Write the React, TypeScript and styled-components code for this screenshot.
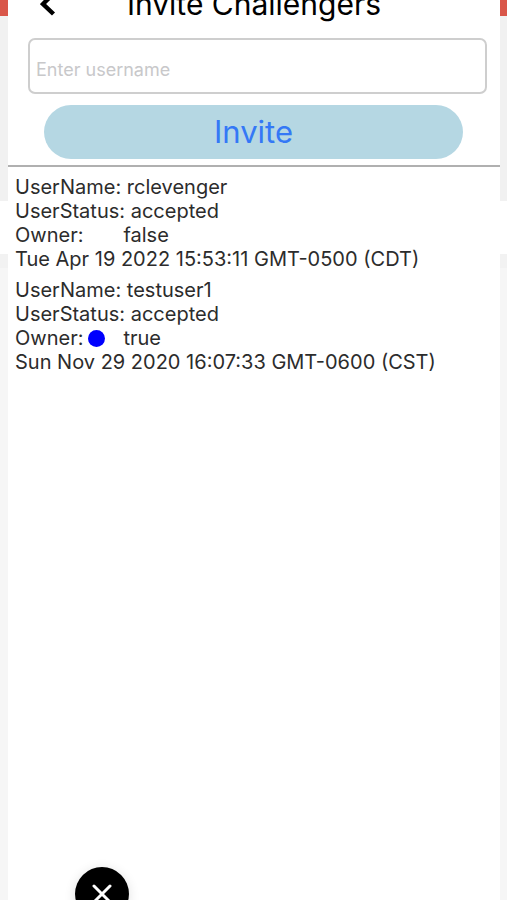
import React, { useState } from "react";
import styled, { createGlobalStyle } from "styled-components";

const GlobalStyle = createGlobalStyle`
  *, *::before, *::after { box-sizing: border-box; }
  body {
    margin: 0;
    background: #f6f6f6;
    font-family: Inter, "Liberation Sans", sans-serif;
  }
`;

const Screen = styled.div`
  display: grid;
  min-height: 100vh;
  overflow: hidden;
`;

const Backdrop = styled.div`
  grid-area: 1 / 1;
  display: flex;
  flex-direction: column;
`;

const Band = styled.div<{ $color: string; $height: number }>`
  height: ${(p) => p.$height}px;
  background: ${(p) => p.$color};
`;

const Sheet = styled.main`
  grid-area: 1 / 1;
  z-index: 1;
  display: flex;
  flex-direction: column;
  margin: 0 7px 0 8px;
  background: #fff;
`;

const Header = styled.header`
  display: grid;
  grid-template-columns: 56px 1fr 56px;
  align-content: end;
  align-items: end;
  height: 21px;
  padding: 0 12px;
`;

const BackButton = styled.button`
  display: flex;
  justify-content: center;
  padding: 0 0 4px;
  border: 0;
  background: none;
  color: #000;
`;

const Title = styled.h1`
  margin: 0;
  color: #000;
  font-size: 30px;
  font-weight: 400;
  line-height: 34px;
  text-align: center;
  white-space: nowrap;
`;

const InviteForm = styled.form`
  display: flex;
  flex-direction: column;
  gap: 11px;
  padding: 17px 13px 6px 20px;
  border-bottom: 2px solid #b0b0b0;
`;

const UsernameInput = styled.input`
  width: 100%;
  height: 56px;
  padding: 6px 6px 0;
  border: 2px solid #cecece;
  border-radius: 7px;
  background: #fff;
  color: #2c2c2c;
  font: inherit;
  font-size: 18px;

  &::placeholder {
    color: #c8c8ca;
    opacity: 1;
  }
`;

const InviteButton = styled.button`
  height: 54px;
  margin: 0 24px 0 16px;
  padding: 0;
  border: 0;
  border-radius: 27px;
  background: #b5d7e3;
  color: #3478f6;
  font: inherit;
  font-size: 31px;
  line-height: 52px;
`;

const ChallengerList = styled.ul`
  display: flex;
  flex-direction: column;
  gap: 7px;
  margin: 0;
  padding: 8px 7px;
  list-style: none;
`;

const Challenger = styled.li`
  color: #2c2c2c;
  font-size: 20px;
  line-height: 24px;
`;

const Line = styled.div`
  display: flex;
  align-items: center;
  gap: 5px;
`;

const OwnerSlot = styled.span`
  display: flex;
  width: 30px;
`;

const OwnerDot = styled.span`
  width: 17px;
  height: 17px;
  border-radius: 50%;
  background: #0000fe;
`;

const CloseButton = styled.button`
  position: fixed;
  z-index: 2;
  bottom: -21px;
  left: 75px;
  display: flex;
  align-items: center;
  justify-content: center;
  width: 54px;
  height: 54px;
  padding: 0;
  border: 0;
  border-radius: 50%;
  background: #000;
  box-shadow: 0 2px 12px rgba(0, 0, 0, 0.12);
  color: #fff;
`;

const bands = [
  { color: "#d95649", height: 16 },
  { color: "#f1f1f1", height: 185 },
  { color: "#ffffff", height: 53 },
  { color: "#f2f2f2", height: 14 },
];

const challengers = [
  {
    name: "rclevenger",
    status: "accepted",
    owner: false,
    date: "Tue Apr 19 2022 15:53:11 GMT-0500 (CDT)",
  },
  {
    name: "testuser1",
    status: "accepted",
    owner: true,
    date: "Sun Nov 29 2020 16:07:33 GMT-0600 (CST)",
  },
];

export default function App() {
  const [username, setUsername] = useState("");

  return (
    <Screen>
      <GlobalStyle />
      <Backdrop aria-hidden="true">
        {bands.map((band) => (
          <Band key={band.color} $color={band.color} $height={band.height} />
        ))}
      </Backdrop>
      <Sheet>
        <Header>
          <BackButton type="button" aria-label="Back">
            <svg width="16" height="26" viewBox="0 0 16 26" fill="none">
              <path
                d="M13.5 2.5 3 13l10.5 10"
                stroke="currentColor"
                strokeWidth="4.4"
              />
            </svg>
          </BackButton>
          <Title>Invite Challengers</Title>
        </Header>
        <InviteForm onSubmit={(event) => event.preventDefault()}>
          <UsernameInput
            type="text"
            aria-label="Username"
            placeholder="Enter username"
            value={username}
            onChange={(event) => setUsername(event.target.value)}
          />
          <InviteButton type="submit">Invite</InviteButton>
        </InviteForm>
        <ChallengerList>
          {challengers.map((person) => (
            <Challenger key={person.name}>
              <Line>UserName: {person.name}</Line>
              <Line>UserStatus: {person.status}</Line>
              <Line>
                Owner:
                <OwnerSlot>{person.owner && <OwnerDot />}</OwnerSlot>
                {String(person.owner)}
              </Line>
              <Line>{person.date}</Line>
            </Challenger>
          ))}
        </ChallengerList>
      </Sheet>
      <CloseButton type="button" aria-label="Close">
        <svg width="20" height="20" viewBox="0 0 20 20" fill="none">
          <path
            d="M2 2l16 16M18 2 2 18"
            stroke="currentColor"
            strokeWidth="3"
            strokeLinecap="round"
          />
        </svg>
      </CloseButton>
    </Screen>
  );
}
